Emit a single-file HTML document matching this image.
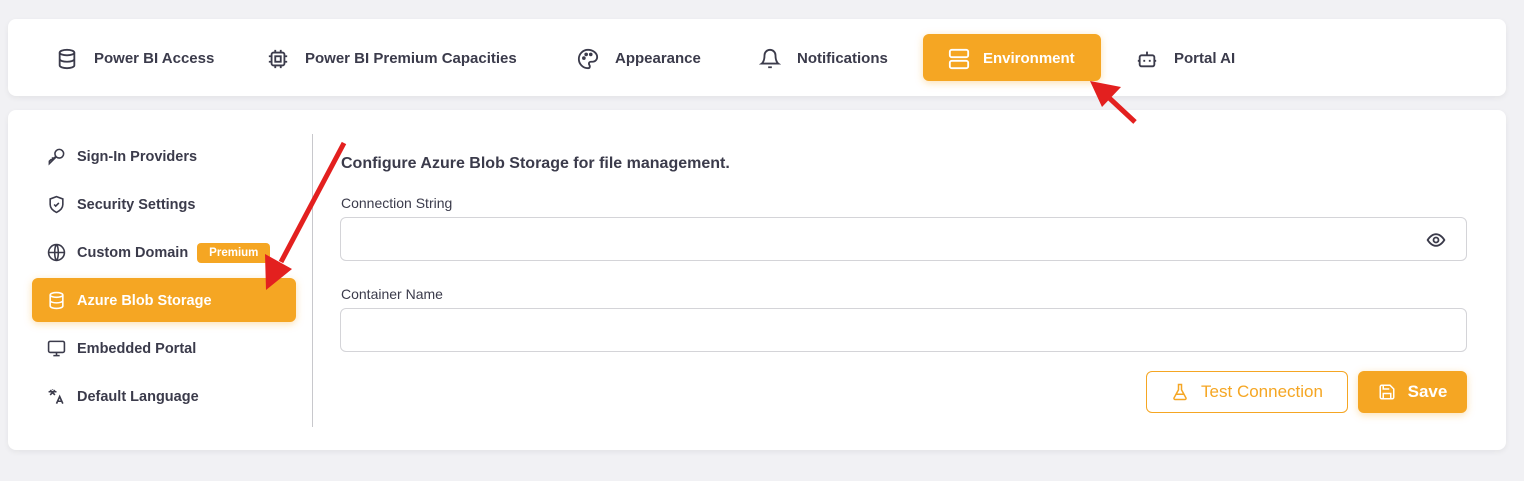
<!DOCTYPE html>
<html><head><meta charset="utf-8"><style>
*{box-sizing:border-box;margin:0;padding:0}
body{width:1524px;height:481px;background:#f1f1f4;font-family:"Liberation Sans",sans-serif;color:#3b3b4b;position:relative;overflow:hidden}
.card{position:absolute;left:8px;width:1498px;background:#fff;border-radius:8px;box-shadow:0 2px 6px rgba(0,0,0,.06)}
.tab{position:absolute;top:34px;height:47px;display:flex;align-items:center;font-size:15px;font-weight:bold;color:#3b3b4b;padding-top:2px}
.tab svg{margin-right:16px}
.act{background:#f5a623;color:#fff;border-radius:6px;box-shadow:0 2px 8px rgba(245,166,35,.35)}
.side{position:absolute;left:32px;width:264px;height:44px;display:flex;align-items:center;padding-left:15px;font-size:14.5px;font-weight:bold;color:#3b3b4b;border-radius:6px;padding-top:1px}
.side svg{margin-right:11px}
.badge{background:#f5a623;color:#fff;font-size:11.5px;padding:4px 12px;border-radius:4px;margin-left:9px}
.input{position:absolute;left:340px;width:1127px;height:44px;border:1px solid #d4d4d8;border-radius:6px}
.lbl{position:absolute;left:341px;font-size:14px;color:#3b3b4b}
svg{flex:none}
</style></head><body>
<div class="card" style="top:19px;height:77px"></div>
<div class="card" style="top:110px;height:340px"></div>

<div class="tab" style="left:56px"><svg width="22" height="22" viewBox="0 0 24 24" fill="none" stroke="#3b3b4b" stroke-width="2"><ellipse cx="12" cy="5" rx="8" ry="3"/><path d="M4 5v14c0 1.7 3.6 3 8 3s8-1.3 8-3V5M4 12c0 1.7 3.6 3 8 3s8-1.3 8-3"/></svg>Power BI Access</div>
<div class="tab" style="left:267px"><svg width="22" height="22" viewBox="0 0 24 24" fill="none" stroke="#3b3b4b" stroke-width="2"><rect x="5" y="5" width="14" height="14" rx="2"/><rect x="9" y="9" width="6" height="6"/><path d="M9 2v3M15 2v3M9 19v3M15 19v3M2 9h3M2 15h3M19 9h3M19 15h3"/></svg>Power BI Premium Capacities</div>
<div class="tab" style="left:577px"><svg width="22" height="22" viewBox="0 0 24 24" fill="none" stroke="#3b3b4b" stroke-width="2"><path d="M12 2a10 10 0 0 0 0 20c1.5 0 2-1 2-2 0-1.5-1-1.5-1-3 0-1 1-2 2-2h2a5 5 0 0 0 5-5c0-4.4-4.5-8-10-8z"/><circle cx="7.5" cy="11" r="1"/><circle cx="10" cy="7" r="1"/><circle cx="15" cy="7" r="1"/></svg>Appearance</div>
<div class="tab" style="left:759px"><svg width="22" height="22" viewBox="0 0 24 24" fill="none" stroke="#3b3b4b" stroke-width="2"><path d="M6 8a6 6 0 0 1 12 0c0 7 3 9 3 9H3s3-2 3-9M10 21h4"/></svg>Notifications</div>
<div class="tab act" style="left:923px;width:178px;padding-left:24px"><svg width="24" height="22" viewBox="0 0 24 24" fill="none" stroke="#fff" stroke-width="2" style="margin-right:12px"><rect x="2" y="2" width="20" height="8" rx="2"/><rect x="2" y="14" width="20" height="8" rx="2"/><path d="M6 6h.01M6 18h.01"/></svg>Environment</div>
<div class="tab" style="left:1136px"><svg width="22" height="22" viewBox="0 0 24 24" fill="none" stroke="#3b3b4b" stroke-width="2"><rect x="4" y="8" width="16" height="12" rx="2"/><path d="M12 8V4M2 14h2M20 14h2M9 13v2M15 13v2"/></svg>Portal AI</div>

<div class="side" style="top:134px"><svg width="19" height="19" viewBox="0 0 24 24" fill="none" stroke="#3b3b4b" stroke-width="2"><circle cx="15.5" cy="8.5" r="5.5"/><path d="M11.5 12.5 3 21v-3l2-2h2v-2h2l2.5-2.5"/></svg>Sign-In Providers</div>
<div class="side" style="top:182px"><svg width="19" height="19" viewBox="0 0 24 24" fill="none" stroke="#3b3b4b" stroke-width="2"><path d="M12 2l8 3v7c0 5-4 8-8 10-4-2-8-5-8-10V5z"/><path d="M9 12l2 2 4-4"/></svg>Security Settings</div>
<div class="side" style="top:230px"><svg width="19" height="19" viewBox="0 0 24 24" fill="none" stroke="#3b3b4b" stroke-width="2"><circle cx="12" cy="12" r="10"/><path d="M2 12h20M12 2c3 3 3 17 0 20M12 2c-3 3-3 17 0 20"/></svg>Custom Domain<span class="badge">Premium</span></div>
<div class="side act" style="top:278px;color:#fff"><svg width="19" height="19" viewBox="0 0 24 24" fill="none" stroke="#fff" stroke-width="2"><ellipse cx="12" cy="5" rx="8" ry="3"/><path d="M4 5v14c0 1.7 3.6 3 8 3s8-1.3 8-3V5M4 12c0 1.7 3.6 3 8 3s8-1.3 8-3"/></svg>Azure Blob Storage</div>
<div class="side" style="top:326px"><svg width="19" height="19" viewBox="0 0 24 24" fill="none" stroke="#3b3b4b" stroke-width="2"><rect x="2" y="3" width="20" height="14" rx="2"/><path d="M8 21h8M12 17v4"/></svg>Embedded Portal</div>
<div class="side" style="top:374px"><svg width="19" height="19" viewBox="0 0 24 24" fill="none" stroke="#3b3b4b" stroke-width="2"><path d="M2 6h10M7 3v1M4 10l6-6M4 4l6 6M12 21l4-9 4 9M13.5 18h5"/></svg>Default Language</div>

<div style="position:absolute;left:312px;top:134px;width:1px;height:293px;background:#c8c8cc"></div>

<div style="position:absolute;left:341px;top:155px;font-size:16px;font-weight:bold;color:#3b3b4b">Configure Azure Blob Storage for file management.</div>
<div class="lbl" style="top:195px">Connection String</div>
<div class="input" style="top:217px"><svg style="position:absolute;right:19px;top:12px" width="22" height="20" viewBox="0 0 24 24" fill="none" stroke="#3b3b4b" stroke-width="2.2"><path d="M2 12s4-7 10-7 10 7 10 7-4 7-10 7S2 12 2 12z"/><circle cx="12" cy="12" r="3"/></svg></div>
<div class="lbl" style="top:286px">Container Name</div>
<div class="input" style="top:308px"></div>

<div style="position:absolute;left:1146px;top:371px;width:202px;height:42px;border:1px solid #f5a623;border-radius:6px;color:#f5a623;font-size:17px;display:flex;align-items:center;justify-content:center"><svg width="18" height="20" viewBox="0 0 24 24" fill="none" stroke="#f5a623" stroke-width="2" style="margin-right:12px"><path d="M9 2h6M10 2v7L4 20a1.5 1.5 0 0 0 1.3 2h13.4a1.5 1.5 0 0 0 1.3-2L14 9V2M7 15h10"/></svg>Test Connection</div>
<div style="position:absolute;left:1358px;top:371px;width:109px;height:42px;background:#f5a623;border-radius:6px;color:#fff;font-size:17px;font-weight:bold;display:flex;align-items:center;justify-content:center;box-shadow:0 2px 8px rgba(245,166,35,.35)"><svg width="18" height="18" viewBox="0 0 24 24" fill="none" stroke="#fff" stroke-width="2" style="margin-right:12px"><path d="M5 3h11l5 5v11a2 2 0 0 1-2 2H5a2 2 0 0 1-2-2V5a2 2 0 0 1 2-2z"/><path d="M7 21v-7h10v7M7 3v5h8"/></svg>Save</div>

<svg style="position:absolute;left:0;top:0" width="1524" height="481">
<line x1="344" y1="143" x2="281" y2="262" stroke="#e3201f" stroke-width="5"/>
<polygon points="266,290 265,254 292,269" fill="#e3201f"/>
<line x1="1135" y1="122" x2="1106" y2="95" stroke="#e3201f" stroke-width="5"/>
<polygon points="1090,81 1121,87 1102,107" fill="#e3201f"/>
</svg>
</body></html>
